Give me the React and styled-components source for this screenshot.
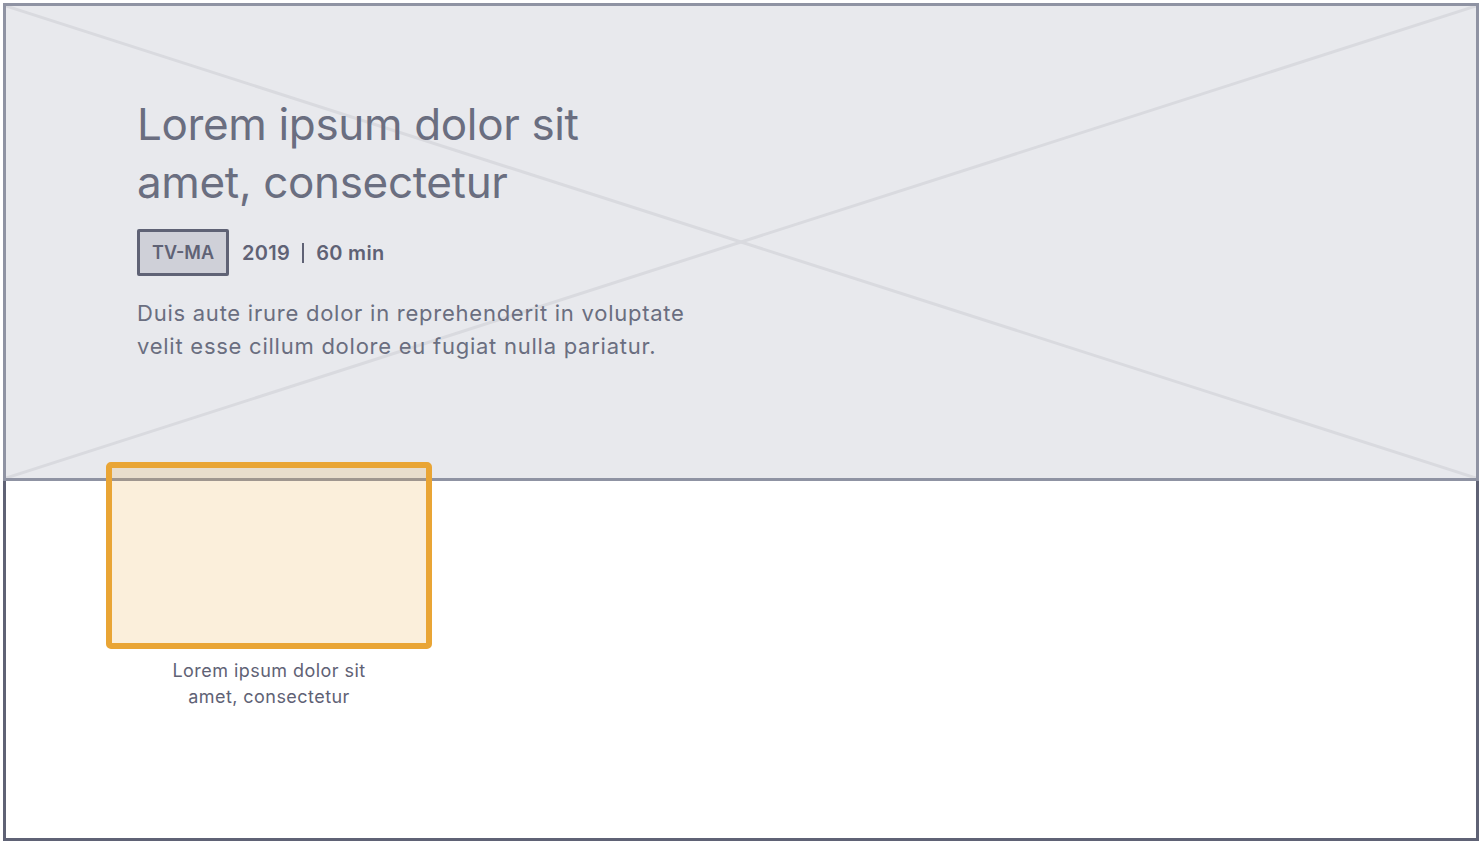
import React from 'react';
import styled, { createGlobalStyle } from 'styled-components';

const colors = {
  ink: '#5f6275',
  text: '#6a6e80',
  heroBg: '#e8e9ed',
  heroEdge: '#8f93a3',
  cross: '#d9dadf',
  badgeBg: '#cfd0d8',
  orange: '#e9a535',
};

const GlobalStyle = createGlobalStyle`
  html, body {
    margin: 0;
    padding: 0;
    background: #ffffff;
  }
  body {
    font-family: Inter, "Liberation Sans", sans-serif;
    color: ${colors.text};
  }
`;

const Page = styled.div`
  width: 1482px;
  height: 844px;
  padding: 3px;
  box-sizing: border-box;
`;

const Frame = styled.div`
  height: 100%;
  display: flex;
  flex-direction: column;
`;

const Hero = styled.section`
  position: relative;
  height: 478px;
  flex: 0 0 auto;
  box-sizing: border-box;
  border: 3px solid ${colors.heroEdge};
  background: ${colors.heroBg};
  padding: 89px 0 0 131px;
`;

const Cross = styled.svg`
  position: absolute;
  inset: 0;
  width: 100%;
  height: 100%;
  pointer-events: none;
`;

const Info = styled.div`
  position: relative;
  display: flex;
  flex-direction: column;
  align-items: flex-start;
`;

const Title = styled.h1`
  margin: 0;
  width: 470px;
  font-size: 44px;
  font-weight: 400;
  line-height: 58px;
  letter-spacing: -0.35px;
  color: ${colors.text};
`;

const Meta = styled.div`
  margin-top: 18px;
  display: flex;
  align-items: center;
  gap: 13px;
`;

const Badge = styled.span`
  box-sizing: border-box;
  height: 47px;
  padding: 0 12px;
  display: flex;
  align-items: center;
  border: 3px solid ${colors.ink};
  border-radius: 2px;
  background: ${colors.badgeBg};
  font-size: 18px;
  font-weight: 600;
  color: ${colors.ink};
`;

const Facts = styled.span`
  display: flex;
  align-items: center;
  gap: 12px;
  font-size: 20px;
  font-weight: 600;
  letter-spacing: 0.3px;
  color: ${colors.ink};
`;

const Divider = styled.span`
  width: 2px;
  height: 20px;
  background: ${colors.ink};
`;

const Blurb = styled.p`
  margin: 21px 0 0;
  width: 560px;
  font-size: 22px;
  line-height: 33px;
  letter-spacing: 0.75px;
  color: ${colors.text};
`;

const Shelf = styled.section`
  flex: 1 1 auto;
  box-sizing: border-box;
  border: 3px solid ${colors.ink};
  border-top: none;
  padding-left: 100px;
`;

const Tile = styled.div`
  width: 326px;
  margin-top: -19px;
  display: flex;
  flex-direction: column;
  align-items: center;
  position: relative;
`;

const Thumb = styled.div`
  width: 326px;
  height: 187px;
  box-sizing: border-box;
  border: 6px solid ${colors.orange};
  border-radius: 5px;
  background: rgba(233, 165, 53, 0.18);
`;

const Caption = styled.div`
  margin-top: 9px;
  text-align: center;
  font-size: 18px;
  line-height: 26px;
  letter-spacing: 0.45px;
  color: ${colors.ink};
`;

export default function App() {
  return (
    <>
      <GlobalStyle />
      <Page>
        <Frame>
          <Hero>
            <Cross preserveAspectRatio="none" viewBox="0 0 100 100">
              <line x1="0" y1="0" x2="100" y2="100" stroke={colors.cross} strokeWidth="3" vectorEffect="non-scaling-stroke" />
              <line x1="100" y1="0" x2="0" y2="100" stroke={colors.cross} strokeWidth="3" vectorEffect="non-scaling-stroke" />
            </Cross>
            <Info>
              <Title>Lorem ipsum dolor sit amet, consectetur</Title>
              <Meta>
                <Badge>TV-MA</Badge>
                <Facts>
                  <span>2019</span>
                  <Divider />
                  <span>60 min</span>
                </Facts>
              </Meta>
              <Blurb>Duis aute irure dolor in reprehenderit in voluptate velit esse cillum dolore eu fugiat nulla pariatur.</Blurb>
            </Info>
          </Hero>
          <Shelf>
            <Tile>
              <Thumb />
              <Caption>Lorem ipsum dolor sit<br />amet, consectetur</Caption>
            </Tile>
          </Shelf>
        </Frame>
      </Page>
    </>
  );
}
